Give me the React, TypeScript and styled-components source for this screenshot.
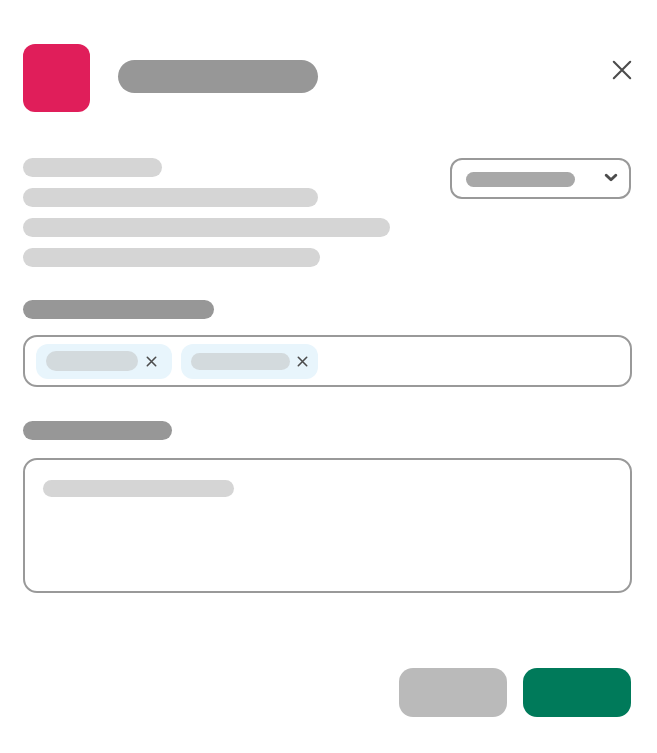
import React from "react";
import styled, { createGlobalStyle } from "styled-components";

const GlobalStyle = createGlobalStyle`
  *, *::before, *::after { box-sizing: border-box; }
  body {
    margin: 0;
    background: #fff;
    font-family: "Liberation Sans", Arial, sans-serif;
  }
`;

const colors = {
  brand: "#e01e5a",
  primary: "#007a5a",
  neutral: "#bababa",
  strong: "#979797",
  medium: "#a8a8a8",
  soft: "#d5d5d5",
  chip: "#e8f5fc",
  chipBar: "#d3dadd",
  outline: "#999",
  icon: "#4c4c4c",
};

const Dialog = styled.form`
  display: flex;
  flex-direction: column;
  padding: 44px 25px 36px 23px;
`;

const Header = styled.header`
  display: flex;
  align-items: flex-start;
  margin-bottom: 46px;
`;

const Logo = styled.div`
  width: 67px;
  height: 68px;
  border-radius: 12px;
  background: ${colors.brand};
`;

const Bar = styled.span<{ $w: number; $h?: number; $color?: string }>`
  display: block;
  flex: none;
  width: ${(p) => p.$w}px;
  max-width: 100%;
  height: ${(p) => p.$h ?? 19}px;
  border-radius: 17px;
  background: ${(p) => p.$color ?? colors.soft};
`;

const Title = styled.h1`
  margin: 16px auto 0 28px;
`;

const IconButton = styled.button`
  display: flex;
  flex: none;
  padding: 0;
  border: 0;
  background: none;
  color: ${colors.icon};
  cursor: pointer;
`;

const CloseButton = styled(IconButton)`
  margin-top: 16px;
`;

const Intro = styled.section`
  display: flex;
  justify-content: space-between;
  align-items: flex-start;
  margin-bottom: 33px;
  padding-right: 1px;
`;

const Lines = styled.div`
  display: flex;
  flex-direction: column;
  gap: 11px;
`;

const SelectBox = styled.div`
  display: grid;
  align-items: center;
  flex: none;
  width: 181px;
  height: 41px;

  > * { grid-area: 1 / 1; }
`;

const Select = styled.select`
  width: 100%;
  height: 100%;
  border: 2px solid ${colors.outline};
  border-radius: 12px;
  background: #fff;
  appearance: none;
`;

const SelectFace = styled.div`
  z-index: 1;
  display: flex;
  justify-content: space-between;
  align-items: center;
  padding: 2px 13px 0 16px;
  color: ${colors.icon};
  pointer-events: none;
`;

const Chevron = styled.svg`
  margin-bottom: 4px;
`;

const Field = styled.div`
  display: flex;
  flex-direction: column;
  gap: 16px;
  margin-bottom: 34px;
`;

const MessageField = styled(Field)`
  gap: 18px;
  margin-bottom: 75px;
`;

const TagBox = styled.div`
  display: flex;
  align-items: center;
  gap: 9px;
  height: 52px;
  padding: 0 11px;
  border: 2px solid ${colors.outline};
  border-radius: 14px;
`;

const Chip = styled.span`
  display: flex;
  flex: none;
  justify-content: space-between;
  align-items: center;
  width: 136px;
  height: 35px;
  padding: 0 15px 0 10px;
  border-radius: 12px;
  background: ${colors.chip};
`;

const WideChip = styled(Chip)`
  width: 137px;
  padding: 1px 10px 0 10px;
`;

const TagInput = styled.input`
  flex: 1;
  min-width: 0;
  border: 0;
  outline: 0;
  background: none;
  font: inherit;
`;

const MessageBox = styled.div`
  display: grid;
  align-items: start;

  > * { grid-area: 1 / 1; }
`;

const Message = styled.textarea`
  display: block;
  width: 100%;
  height: 135px;
  padding: 20px;
  border: 2px solid ${colors.outline};
  border-radius: 14px;
  outline: 0;
  resize: none;
  font: inherit;
`;

const Placeholder = styled.div`
  z-index: 1;
  padding: 22px 20px;
  pointer-events: none;
`;

const Actions = styled.footer`
  display: flex;
  justify-content: flex-end;
  gap: 16px;
  padding-right: 1px;
`;

const Button = styled.button<{ $primary?: boolean }>`
  width: 108px;
  height: 49px;
  border: 0;
  border-radius: 14px;
  background: ${(p) => (p.$primary ? colors.primary : colors.neutral)};
  cursor: pointer;
`;

function Cross({ size, stroke, inset }: { size: number; stroke: number; inset: number }) {
  const a = inset;
  const b = size - inset;
  return (
    <svg width={size} height={size} viewBox={`0 0 ${size} ${size}`} fill="none" aria-hidden="true">
      <path
        d={`M${a} ${a}L${b} ${b}M${b} ${a}L${a} ${b}`}
        stroke="currentColor"
        strokeWidth={stroke}
        strokeLinecap="round"
      />
    </svg>
  );
}

export default function App() {
  return (
    <>
      <GlobalStyle />
      <Dialog onSubmit={(e) => e.preventDefault()}>
        <Header>
          <Logo />
          <Title aria-label="Title">
            <Bar $w={200} $h={33} $color={colors.strong} />
          </Title>
          <CloseButton type="button" aria-label="Close">
            <Cross size={20} stroke={2.1} inset={1.8} />
          </CloseButton>
        </Header>

        <Intro>
          <Lines>
            <Bar $w={139} />
            <Bar $w={295} />
            <Bar $w={367} />
            <Bar $w={297} />
          </Lines>
          <SelectBox>
            <Select aria-label="Option" />
            <SelectFace>
              <Bar $w={109} $h={15} $color={colors.medium} />
              <Chevron width="14" height="9" viewBox="0 0 14 9" fill="none" aria-hidden="true">
                <path
                  d="M2.2 2.2L7 6.8L11.8 2.2"
                  stroke="currentColor"
                  strokeWidth="2.9"
                  strokeLinecap="round"
                  strokeLinejoin="round"
                />
              </Chevron>
            </SelectFace>
          </SelectBox>
        </Intro>

        <Field>
          <label htmlFor="tags" aria-label="Tags">
            <Bar $w={191} $color={colors.strong} />
          </label>
          <TagBox>
            <Chip>
              <Bar $w={92} $h={20} $color={colors.chipBar} />
              <IconButton type="button" aria-label="Remove first tag">
                <Cross size={11} stroke={1.6} inset={1.3} />
              </IconButton>
            </Chip>
            <WideChip>
              <Bar $w={99} $h={17} $color={colors.chipBar} />
              <IconButton type="button" aria-label="Remove second tag">
                <Cross size={11} stroke={1.6} inset={1.3} />
              </IconButton>
            </WideChip>
            <TagInput id="tags" type="text" />
          </TagBox>
        </Field>

        <MessageField>
          <label htmlFor="message" aria-label="Message">
            <Bar $w={149} $color={colors.strong} />
          </label>
          <MessageBox>
            <Message id="message" />
            <Placeholder>
              <Bar $w={191} $h={17} />
            </Placeholder>
          </MessageBox>
        </MessageField>

        <Actions>
          <Button type="button" aria-label="Cancel" />
          <Button type="submit" aria-label="Submit" $primary />
        </Actions>
      </Dialog>
    </>
  );
}
